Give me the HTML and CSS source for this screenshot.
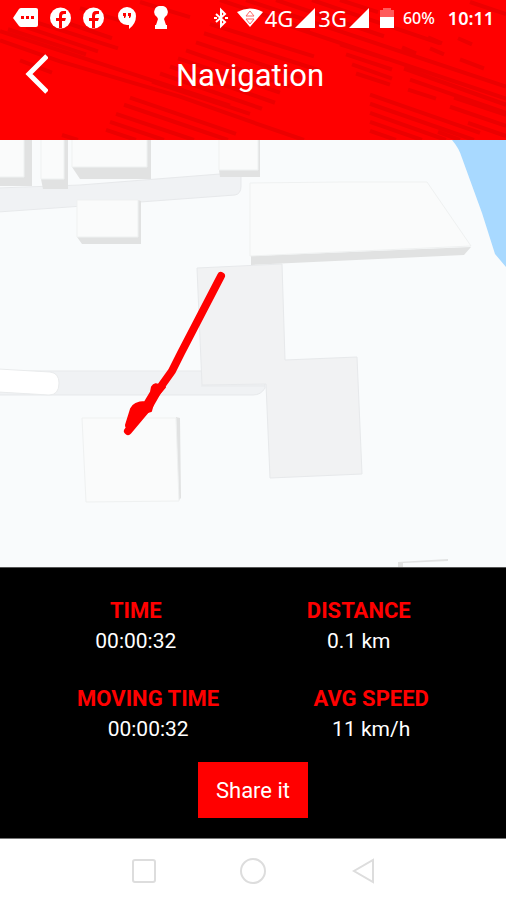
FILE: index.html
```html
<!DOCTYPE html>
<html lang="en">
<head>
	<meta charset="utf-8">
	<meta name="viewport" content="width=device-width, initial-scale=1">
	<title>Navigation</title>
	<link rel="stylesheet" href="styles.css">
</head>
<body>
	<header class="top">
		<svg class="stripes" viewBox="0 0 506 139" preserveAspectRatio="none" aria-hidden="true">
			<path d="M20 17L118 48M50 17L112 38M26 27L98 51M8 29L86 54M0 40L60 61L180 96L260 124L304 139M0 31L150 79L230 105M20 60L52 72M80 8L122 21M140 2L190 17M196 42L304 78M204 33L320 70M210 24L314 56M186 50L290 86M178 58L280 92M170 66L275 102M160 73L262 108M152 81L250 113M130 97L236 133M124 104L228 139M116 113L194 139M110 121L164 139M106 129L136 139M62 134L78 139"/>
			<path d="M220 0L310 30M246 0L506 86M276 0L384 36M312 0L440 43M340 0L378 12M290 26L506 98M340 44L388 59M346 54L392 69M352 64L392 78M356 73L390 84M404 68L506 104M410 79L506 112M408 89L436 98M370 94L480 132M370 103L474 139M370 112L446 139M370 121L422 139M370 130L396 139M402 47L416 53M428 37L442 43M430 48L444 54M458 38L472 44M460 59L484 68M454 97L506 114M450 106L506 125M438 131L460 139M468 122L506 135M470 2L506 14"/>
		</svg>
		<div class="status">
			<div class="notices">
				<svg width="25" height="22" viewBox="0 0 25 22"><path fill="#fff" d="M8 1h15q2 0 2 2v15q0 2-2 2H8q-1 0-2-1L0 11l6-9q1-1 2-1z"/><path fill="#f00" d="M8 9h3v3H8zM13 9h3v3h-3zM18 9h3v3h-3z"/></svg>
				<svg width="21" height="22" viewBox="0 0 21 22"><circle cx="10.500" cy="11" r="10.500" fill="#fff"/><path fill="#f00" d="M9 21v-7H6v-3h3V9q0-5 4-5h3v3h-2q-2 0-2 2v2h4l-1 3h-3v7z"/></svg>
				<svg width="21" height="22" viewBox="0 0 21 22"><circle cx="10.500" cy="11" r="10.500" fill="#fff"/><path fill="#f00" d="M9 21v-7H6v-3h3V9q0-5 4-5h3v3h-2q-2 0-2 2v2h4l-1 3h-3v7z"/></svg>
				<svg class="chat" width="18" height="22" viewBox="0 0 18 22"><path fill="#fff" d="M9 0a9 9 0 0 1 9 9q0 8-7 13v-4H9A9 9 0 0 1 9 0z"/><path fill="#f00" d="M5 6h3v3l-1 2H6V9H5zM10 6h3v3l-1 2h-1V9h-1z"/></svg>
				<svg width="14" height="24" viewBox="0 0 14 24"><path fill="#fff" d="M7 0a6 6 0 0 1 4 11l-1 2 2 6h1v4H1v-4h1l2-6-1-2A6 6 0 0 1 7 0z"/></svg>
			</div>
			<div class="system">
				<svg width="14" height="22" viewBox="0 0 14 22"><path fill="none" stroke="#fff" stroke-width="2" d="M2 7l9 8-4 4V3l4 4-9 8"/><path fill="#fff" d="M0 10h3v2H0zM11 10h3v2h-3z"/></svg>
				<svg class="wifi" width="26" height="22" viewBox="0 0 26 22"><path fill="#fff" d="M0 5Q13-2 26 5L13 20z"/><path fill="none" stroke="#f66" d="M9 9l4-5 4 5zM9 12l4 5 4-5z"/></svg>
				<span class="net">4G</span>
				<svg class="signal" width="20" height="20" viewBox="0 0 20 20"><path fill="#fff" d="M20 0v20H0z"/></svg>
				<span class="net">3G</span>
				<svg class="signal" width="20" height="20" viewBox="0 0 20 20"><path fill="#fff" d="M20 0v20H0z"/></svg>
				<svg class="battery" width="14" height="22" viewBox="0 0 14 22"><path fill="#ff5a5a" d="M3 1h8v2h3v7H0V3h3z"/><path fill="#fff" d="M0 10h14v11H0z"/></svg>
				<span class="charge">60%</span>
				<span class="clock">10:11</span>
			</div>
		</div>
		<div class="bar">
			<button class="back" type="button" aria-label="Back">
				<svg width="24" height="40" viewBox="0 0 24 40"><path fill="none" stroke="#fff" stroke-width="5" d="M23 2L5 20l18 18"/></svg>
			</button>
			<h1 class="title">Navigation</h1>
		</div>
	</header>

	<main class="map">
		<svg viewBox="0 0 506 427" preserveAspectRatio="xMidYMid slice" role="img" aria-label="Map with the recorded route">
			<!-- water -->
			<path fill="#a8d9ff" d="M452 0q7 8 10 18l20 55 13 41 11 13V0z"/>
			<!-- roads and yards -->
			<g fill="#f0f2f4" stroke="#e7e9eb">
				<path d="M-2 48L80 45 220 34h21v12q0 8-6 9L140 62-2 72z"/>
				<path d="M-2 231H265v17q-4 7-12 7H-2z"/>
				<path fill="#f1f2f3" d="M197 128l85-4 3 96 72-3 5 117-92 4-4-94-64 1z"/>
				<path fill="none" d="M201 246h64"/>
			</g>
			<path fill="#fff" stroke="#e9ebec" d="M-2 229l52 3q9 1 9 11 0 12-10 12L-2 252z"/>
			<!-- buildings, side walls first -->
			<g fill="#e1e2e2">
				<path d="M0 37h24V0h8v46H0zM41 39h23V0h4v49H43zM72 27h75V0h4v39H80zM219 30h38V0h3v37h-40z"/>
				<path d="M77 97h61V60l3 1v43H82zM251 116l220-9-7 8-213 10zM176 277l4 1 1 80-3 3zM398 422l50-3v2l-45 2v4h-5z"/>
			</g>
			<g fill="#fafbfb" stroke="#eff1f1">
				<path d="M-2-2h26v39H-2zM41-2h23v41H41zM72-2h75v29H72zM219-2h39v32h-39z"/>
				<path d="M77 60h61v37H77z"/>
				<path d="M250 43l91-1h86l44 64-221 10z"/>
				<path d="M82 278h94l3 83-93 1z"/>
			</g>
			<!-- recorded route -->
			<path fill="none" stroke="#f00" stroke-width="8" stroke-linecap="round" stroke-linejoin="round" d="M221 136l-40 77-9 18-15 21-8 14-21 25"/>
			<path fill="#f00" stroke="#f00" stroke-width="2" stroke-linejoin="round" d="M152 247q3-5 8-1l5 1-11 13-3 11-10 3-9 12q-6 4-6-1l5-16q3-7 14-7l6-10z"/>
		</svg>
	</main>

	<section class="stats">
		<dl class="row">
			<div class="stat"><dt>TIME</dt><dd>00:00:32</dd></div>
			<div class="stat"><dt>DISTANCE</dt><dd>0.1 km</dd></div>
		</dl>
		<dl class="row">
			<div class="stat"><dt>MOVING TIME</dt><dd>00:00:32</dd></div>
			<div class="stat"><dt>AVG SPEED</dt><dd>11 km/h</dd></div>
		</dl>
		<button class="share" type="button">Share it</button>
	</section>

	<nav class="keys">
		<button type="button" aria-label="Recent apps"><svg width="26" height="26" viewBox="0 0 26 26"><rect x="3" y="2" width="22" height="22" rx="2"/></svg></button>
		<button type="button" aria-label="Home"><svg width="26" height="26" viewBox="0 0 26 26"><circle cx="13" cy="13" r="12"/></svg></button>
		<button type="button" aria-label="Go back"><svg width="26" height="26" viewBox="0 0 26 26"><path d="M23 2v22L4 13z"/></svg></button>
	</nav>
</body>
</html>
```

FILE: styles.css
```css
* {
	box-sizing: border-box;
}

body {
	margin: 0;
	min-height: 100vh;
	display: flex;
	flex-direction: column;
	background: #fff;
	color: #fff;
	font-family: Roboto, sans-serif;
}

svg {
	display: block;
	flex: none;
}

button {
	padding: 0;
	border: 0;
	background: none;
	color: inherit;
	font: inherit;
	cursor: pointer;
}

/* header */
.top {
	position: relative;
	background: #f00;
	padding-bottom: 36px;
}

.stripes {
	position: absolute;
	top: 0;
	left: 0;
	width: 100%;
	height: 100%;
	fill: none;
	stroke: #ec0000;
	stroke-width: 4;
}

.status,
.bar {
	position: relative;
}

.status {
	display: flex;
	justify-content: space-between;
	align-items: center;
	height: 35px;
	padding: 0 12px 0 13px;
}

.notices {
	display: flex;
	align-items: center;
	gap: 12px;
}

.chat {
	margin: 0 6px 0 2px;
}

.system {
	display: flex;
	align-items: center;
	font-family: "Noto Sans", sans-serif;
	line-height: 24px;
}

.wifi {
	margin: 0 2px 0 9px;
}

.net {
	font-size: 22px;
}

.signal {
	margin: 0 3px 0 2px;
}

.battery {
	margin: 0 9px 0 8px;
}

.charge {
	font-size: 16px;
	font-weight: 500;
	margin-right: 13px;
}

.clock {
	font-size: 18px;
	font-weight: 600;
}

.bar {
	display: grid;
	grid-template-columns: 48px 1fr 48px;
	align-items: center;
	height: 69px;
	padding-top: 8px;
}

.back {
	justify-self: end;
}

.bar .title {
	margin: 0;
	padding-top: 4px;
	padding-right: 6px;
	font-size: 31px;
	font-weight: 400;
	line-height: 40px;
	text-align: center;
}

/* map */
.map {
	flex: 1 0 320px;
	display: flex;
	min-height: 0;
	background: #f9fbfc;
}

.map svg {
	flex: 1;
	width: 100%;
	height: auto;
}

/* stats */
.stats {
	display: flex;
	flex-direction: column;
	gap: 28px;
	padding: 28px 0 20px;
	background: #000;
	border-top: 1px solid #555;
	border-bottom: 1px solid #777;
}

.row {
	display: flex;
	justify-content: space-around;
	margin: 0;
	padding: 0 30px;
	line-height: 30px;
	text-align: center;
}

.stat dt {
	color: #f00;
	font-size: 22px;
	font-weight: 700;
}

.stat dd {
	margin: 0;
	font-size: 21px;
}

.share {
	align-self: center;
	height: 56px;
	padding: 0 18px;
	margin-top: -10px;
	background: #f00;
	font-size: 22px;
}

/* system keys */
.keys {
	display: flex;
	justify-content: center;
	align-items: center;
	gap: 84px;
	height: 61px;
	padding-top: 2px;
}

.keys svg {
	fill: none;
	stroke: #ddd;
	stroke-width: 2;
}
```
